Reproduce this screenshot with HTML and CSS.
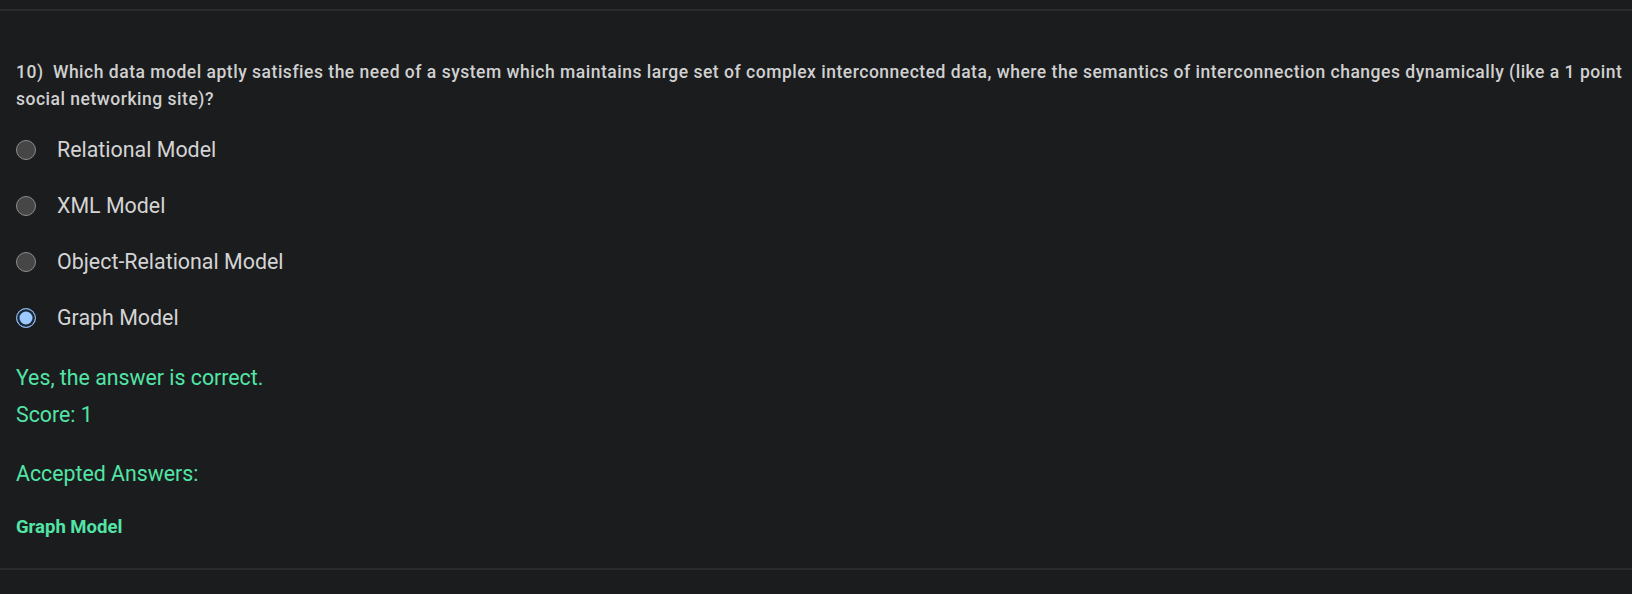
FILE: index.html
```html
<!DOCTYPE html>
<html>
<head>
<meta charset="utf-8">
<link rel="stylesheet" href="styles.css">
</head>
<body>
<div class="page">
  <div class="divider"></div>
  <section class="question">
    <p class="qtext">10)&ensp;Which data model aptly satisfies the need of a system which maintains large set of complex interconnected data, where the semantics of interconnection changes dynamically (like a 1 point social networking site)?</p>
    <ul class="options">
      <li class="option"><span class="radio"></span><span class="label">Relational Model</span></li>
      <li class="option"><span class="radio"></span><span class="label">XML Model</span></li>
      <li class="option"><span class="radio"></span><span class="label">Object-Relational Model</span></li>
      <li class="option"><span class="radio selected"></span><span class="label">Graph Model</span></li>
    </ul>
    <div class="feedback">
      <p class="fb-line">Yes, the answer is correct.</p>
      <p class="fb-line score">Score: 1</p>
      <p class="fb-line accepted">Accepted Answers:</p>
      <p class="answer">Graph Model</p>
    </div>
  </section>
  <div class="divider"></div>
</div>
</body>
</html>
```

FILE: styles.css
```css
html, body {
  margin: 0;
  padding: 0;
  background: #1b1c1e;
}
body {
  font-family: Roboto, "Liberation Sans", sans-serif;
  color: #d2d2d2;
  width: 1632px;
  height: 594px;
  overflow: hidden;
}
.page {
  padding-top: 9px;
}
.divider {
  height: 2px;
  background: #2a2b2e;
}
.question {
  padding: 48px 2px 30px 16px;
}
.qtext {
  margin: 0;
  font-size: 17.5px;
  line-height: 26.5px;
  font-weight: 500;
  letter-spacing: 0.51px;
  color: #d0d0d0;
}
.options {
  list-style: none;
  margin: 26px 0 0 0;
  padding: 0;
  display: flex;
  flex-direction: column;
  gap: 32px;
}
.option {
  display: flex;
  align-items: center;
  height: 24px;
}
.radio {
  width: 20px;
  height: 20px;
  box-sizing: border-box;
  border-radius: 50%;
  background: #464646;
  border: 1.5px solid #8c8c8c;
  flex: none;
}
.radio.selected {
  background: #9cc9ff;
  border: 1.5px solid #8ab8f2;
  box-shadow: inset 0 0 0 2.5px #1f2a38;
}
.label {
  margin-left: 21px;
  font-size: 21.4px;
  line-height: 24px;
  color: #d4d4d4;
}
.feedback {
  margin-top: 36px;
  color: #52e5a6;
}
.fb-line {
  margin: 0;
  font-size: 21.3px;
  line-height: 24px;
}
.score {
  margin-top: 13px;
}
.accepted {
  margin-top: 35px;
}
.answer {
  margin: 30px 0 0 0;
  font-size: 18.5px;
  line-height: 22px;
  font-weight: 700;
}
```
